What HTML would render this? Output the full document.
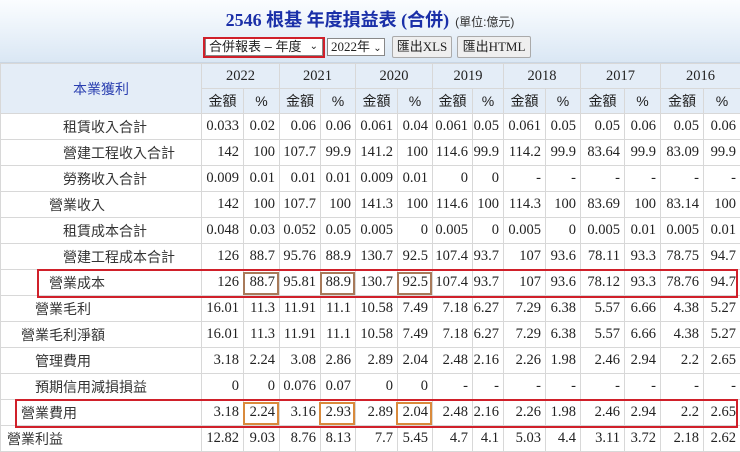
<!DOCTYPE html>
<html><head><meta charset="utf-8"><style>
*{margin:0;padding:0;box-sizing:border-box}
body{width:740px;height:452px;overflow:hidden;background:#fff;position:relative;font-family:"Liberation Serif","Noto Serif CJK SC",serif;}
.top{position:absolute;left:0;top:0;width:740px;height:63px;background:linear-gradient(#fbfdff,#dae7f4);border-bottom:1px solid #c9d6e4}
.title{position:absolute;top:6px;left:0;width:740px;text-align:center;font-size:18px;font-weight:bold;color:#1a2fa8;font-family:"Liberation Serif","Noto Sans CJK TC",serif}
.title small{font-size:12px;font-weight:normal;color:#333;margin-left:6px;font-family:"Liberation Sans","Noto Sans CJK TC",sans-serif}
.sel{position:absolute;top:38px;height:18px;border:1px solid #888;background:#fff;font-size:13px;color:#222;padding-left:3px;line-height:16px;font-family:"Liberation Sans","Noto Sans CJK TC",sans-serif}
.btn{position:absolute;top:36px;height:22px;border:1px solid #aaa;border-radius:2px;background:#efefef;font-size:13px;line-height:20px;text-align:center;color:#222;font-family:"Liberation Serif","Noto Sans CJK TC",serif}
table{position:absolute;left:0;top:63px;border-collapse:collapse;table-layout:fixed;width:740px}
td{border:1px solid #d8d8d8;height:26px;font-size:14.5px;color:#222;text-align:right;padding-right:4px;white-space:nowrap;overflow:visible}
tr.h td{background:#e4edf7;text-align:center;padding:0;height:25px;color:#222}
tr.h2 td{font-family:"Liberation Sans","Noto Sans CJK TC",sans-serif;font-size:14px}
td.l{text-align:left;font-family:"Liberation Sans","Noto Sans CJK TC",sans-serif;font-size:14px;color:#333}
.box{position:absolute;border:2px solid #d0202a}
.ob{position:absolute;border:2px solid #d98a3c;height:23px}
</style></head><body>
<div class="top"></div>
<div class="title">2546 根基 年度損益表 (合併)<small>(單位:億元)</small></div>
<div class="sel" style="left:205px;width:118px">合併報表 – 年度 <span style="position:absolute;right:4px;font-size:10px">&#x2304;</span></div>
<div class="box" style="left:203px;top:37px;width:122px;height:21px"></div>
<div class="sel" style="left:327px;width:58px;font-family:'Liberation Serif','Noto Sans CJK TC',serif">2022年 <span style="font-size:10px">&#x2304;</span></div>
<div class="btn" style="left:392px;width:60px">匯出XLS</div>
<div class="btn" style="left:457px;width:74px">匯出HTML</div>
<table>
<colgroup><col style="width:201px"><col style="width:42px"><col style="width:36px"><col style="width:41px"><col style="width:35px"><col style="width:42px"><col style="width:35px"><col style="width:40px"><col style="width:31px"><col style="width:42px"><col style="width:35px"><col style="width:44px"><col style="width:36px"><col style="width:43px"><col style="width:37px"></colgroup>
<tr class="h"><td rowspan="2" style="color:#2a3fb0;font-family:'Liberation Sans','Noto Sans CJK TC',sans-serif;font-size:14px">本業獲利</td><td colspan="2">2022</td><td colspan="2">2021</td><td colspan="2">2020</td><td colspan="2">2019</td><td colspan="2">2018</td><td colspan="2">2017</td><td colspan="2">2016</td></tr>
<tr class="h h2"><td>金額</td><td>%</td><td>金額</td><td>%</td><td>金額</td><td>%</td><td>金額</td><td>%</td><td>金額</td><td>%</td><td>金額</td><td>%</td><td>金額</td><td>%</td></tr>
<tr><td class="l" style="padding-left:62px">租賃收入合計</td><td>0.033</td><td>0.02</td><td>0.06</td><td>0.06</td><td>0.061</td><td>0.04</td><td>0.061</td><td>0.05</td><td>0.061</td><td>0.05</td><td>0.05</td><td>0.06</td><td>0.05</td><td>0.06</td></tr>
<tr><td class="l" style="padding-left:62px">營建工程收入合計</td><td>142</td><td>100</td><td>107.7</td><td>99.9</td><td>141.2</td><td>100</td><td>114.6</td><td>99.9</td><td>114.2</td><td>99.9</td><td>83.64</td><td>99.9</td><td>83.09</td><td>99.9</td></tr>
<tr><td class="l" style="padding-left:62px">勞務收入合計</td><td>0.009</td><td>0.01</td><td>0.01</td><td>0.01</td><td>0.009</td><td>0.01</td><td>0</td><td>0</td><td>-</td><td>-</td><td>-</td><td>-</td><td>-</td><td>-</td></tr>
<tr><td class="l" style="padding-left:48px">營業收入</td><td>142</td><td>100</td><td>107.7</td><td>100</td><td>141.3</td><td>100</td><td>114.6</td><td>100</td><td>114.3</td><td>100</td><td>83.69</td><td>100</td><td>83.14</td><td>100</td></tr>
<tr><td class="l" style="padding-left:62px">租賃成本合計</td><td>0.048</td><td>0.03</td><td>0.052</td><td>0.05</td><td>0.005</td><td>0</td><td>0.005</td><td>0</td><td>0.005</td><td>0</td><td>0.005</td><td>0.01</td><td>0.005</td><td>0.01</td></tr>
<tr><td class="l" style="padding-left:62px">營建工程成本合計</td><td>126</td><td>88.7</td><td>95.76</td><td>88.9</td><td>130.7</td><td>92.5</td><td>107.4</td><td>93.7</td><td>107</td><td>93.6</td><td>78.11</td><td>93.3</td><td>78.75</td><td>94.7</td></tr>
<tr><td class="l" style="padding-left:48px">營業成本</td><td>126</td><td>88.7</td><td>95.81</td><td>88.9</td><td>130.7</td><td>92.5</td><td>107.4</td><td>93.7</td><td>107</td><td>93.6</td><td>78.12</td><td>93.3</td><td>78.76</td><td>94.7</td></tr>
<tr><td class="l" style="padding-left:34px">營業毛利</td><td>16.01</td><td>11.3</td><td>11.91</td><td>11.1</td><td>10.58</td><td>7.49</td><td>7.18</td><td>6.27</td><td>7.29</td><td>6.38</td><td>5.57</td><td>6.66</td><td>4.38</td><td>5.27</td></tr>
<tr><td class="l" style="padding-left:20px">營業毛利淨額</td><td>16.01</td><td>11.3</td><td>11.91</td><td>11.1</td><td>10.58</td><td>7.49</td><td>7.18</td><td>6.27</td><td>7.29</td><td>6.38</td><td>5.57</td><td>6.66</td><td>4.38</td><td>5.27</td></tr>
<tr><td class="l" style="padding-left:34px">管理費用</td><td>3.18</td><td>2.24</td><td>3.08</td><td>2.86</td><td>2.89</td><td>2.04</td><td>2.48</td><td>2.16</td><td>2.26</td><td>1.98</td><td>2.46</td><td>2.94</td><td>2.2</td><td>2.65</td></tr>
<tr><td class="l" style="padding-left:34px">預期信用減損損益</td><td>0</td><td>0</td><td>0.076</td><td>0.07</td><td>0</td><td>0</td><td>-</td><td>-</td><td>-</td><td>-</td><td>-</td><td>-</td><td>-</td><td>-</td></tr>
<tr><td class="l" style="padding-left:20px">營業費用</td><td>3.18</td><td>2.24</td><td>3.16</td><td>2.93</td><td>2.89</td><td>2.04</td><td>2.48</td><td>2.16</td><td>2.26</td><td>1.98</td><td>2.46</td><td>2.94</td><td>2.2</td><td>2.65</td></tr>
<tr><td class="l" style="padding-left:6px">營業利益</td><td>12.82</td><td>9.03</td><td>8.76</td><td>8.13</td><td>7.7</td><td>5.45</td><td>4.7</td><td>4.1</td><td>5.03</td><td>4.4</td><td>3.11</td><td>3.72</td><td>2.18</td><td>2.62</td></tr>
</table>
<div class="box" style="left:37px;top:269px;width:701px;height:29px"></div>
<div class="ob" style="left:243px;top:272px;width:36px;border-color:#a87a5a"></div>
<div class="ob" style="left:320px;top:272px;width:35px;border-color:#a87a5a"></div>
<div class="ob" style="left:397px;top:272px;width:35px;border-color:#a87a5a"></div>
<div class="box" style="left:15px;top:399px;width:723px;height:29px"></div>
<div class="ob" style="left:243px;top:402px;width:36px"></div>
<div class="ob" style="left:319px;top:402px;width:36px"></div>
<div class="ob" style="left:396px;top:402px;width:36px"></div>
</body></html>
